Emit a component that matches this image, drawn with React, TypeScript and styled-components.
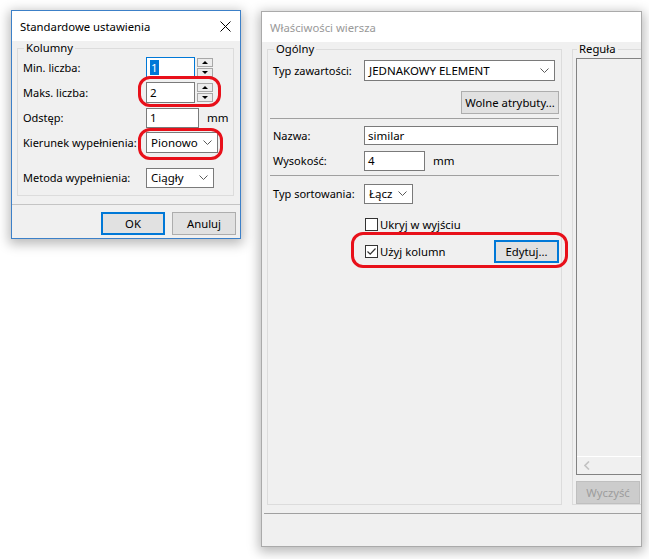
import React from "react";
import styled, { createGlobalStyle, css } from "styled-components";

const GlobalStyle = createGlobalStyle`
  html, body {
    margin: 0;
    padding: 0;
    background: #fff;
  }
  body {
    font-family: "Noto Sans", "Segoe UI", sans-serif;
    font-size: 11px;
    color: #000;
  }
`;

const Desktop = styled.div`
  position: relative;
  width: 649px;
  height: 559px;
  overflow: hidden;
  background: #fff;
`;

const Window = styled.div<{ $x: number; $y: number; $w: number; $h: number; $active?: boolean }>`
  position: absolute;
  left: ${(p) => p.$x}px;
  top: ${(p) => p.$y}px;
  width: ${(p) => p.$w}px;
  height: ${(p) => p.$h}px;
  box-sizing: border-box;
  border: 1px solid ${(p) => (p.$active ? "#3c80c8" : "#aaaaaa")};
  background: #f0f0f0;
  box-shadow: 0 3px 11px 2px rgba(0, 0, 0, 0.28);
  display: flex;
  flex-direction: column;
  overflow: hidden;
`;

const TitleBar = styled.div<{ $active?: boolean }>`
  height: 30px;
  flex: none;
  background: #fff;
  display: flex;
  align-items: center;
  padding-left: 8px;
  font-size: 11.3px;
  color: ${(p) => (p.$active ? "#000" : "#999")};
`;

const CloseIcon = styled.svg`
  margin-left: auto;
  margin-right: 9px;
`;

const DialogBody = styled.div`
  flex: 1;
  display: flex;
  flex-direction: column;
`;

const GroupArea = styled.div`
  padding: 0 6px 0 5px;
`;

const Group = styled.fieldset<{ $pl?: number; $pr?: number; $pb?: number; $w?: number }>`
  margin: 0;
  min-width: 0;
  box-sizing: border-box;
  border: 1px solid #dcdcdc;
  padding: 0 ${(p) => p.$pr ?? 2}px ${(p) => p.$pb ?? 5}px ${(p) => p.$pl ?? 5}px;
  display: flex;
  flex-direction: column;
  ${(p) => p.$w && css`width: ${p.$w}px; flex: none;`}
`;

const Legend = styled.legend`
  margin-left: 1px;
  padding: 0 2px;
  line-height: 14px;
  font-size: 11.3px;
`;

const Row = styled.div<{ $h: number; $mt?: number; $label: number }>`
  display: grid;
  grid-template-columns: ${(p) => p.$label}px auto;
  align-items: center;
  height: ${(p) => p.$h}px;
  margin-top: ${(p) => p.$mt ?? 0}px;
  font-size: 11px;
  white-space: nowrap;
`;

const Controls = styled.div<{ $end?: boolean }>`
  display: flex;
  align-items: center;
  justify-content: ${(p) => (p.$end ? "flex-end" : "flex-start")};
`;

const Field = styled.div<{ $w: number; $h: number; $focused?: boolean }>`
  box-sizing: border-box;
  width: ${(p) => p.$w}px;
  height: ${(p) => p.$h}px;
  border: 1px solid ${(p) => (p.$focused ? "#0078d7" : "#7a7a7a")};
  background: #fff;
  display: flex;
  align-items: center;
  padding-left: 3px;
  font-size: 11.5px;
`;

const Selected = styled.span`
  background: #0078d7;
  color: #fff;
  padding: 0 1px;
`;

const SpinButtons = styled.div`
  display: flex;
  flex-direction: column;
  gap: 1px;
  margin-left: 2px;
`;

const SpinButton = styled.div<{ $down?: boolean }>`
  box-sizing: border-box;
  width: 16px;
  height: 9px;
  border: 1px solid #a8a8a8;
  background: #ececec;
  display: flex;
  align-items: center;
  justify-content: center;

  &::after {
    content: "";
    border-left: 3px solid transparent;
    border-right: 3px solid transparent;
    ${(p) =>
      p.$down
        ? css`border-top: 3px solid #000;`
        : css`border-bottom: 3px solid #000;`}
  }
`;

const Combo = styled.div<{ $w: number; $h: number }>`
  box-sizing: border-box;
  width: ${(p) => p.$w}px;
  height: ${(p) => p.$h}px;
  border: 1px solid #7a7a7a;
  background: #fff;
  display: flex;
  align-items: center;
  padding: 0 5px 0 4px;
  font-size: 11.5px;
`;

const ComboText = styled.span`
  flex: 1;
`;

const Unit = styled.span`
  margin-left: 8px;
  font-size: 11.5px;
`;

const Separator = styled.div<{ $color?: string; $mt?: number; $ml?: number }>`
  height: 1px;
  flex: none;
  background: ${(p) => p.$color ?? "#a0a0a0"};
  margin-top: ${(p) => p.$mt ?? 0}px;
  margin-left: ${(p) => p.$ml ?? 0}px;
`;

const ButtonRow = styled.div`
  display: flex;
  justify-content: flex-end;
  gap: 7px;
  padding-right: 4px;
  margin-top: 7px;
`;

const Button = styled.button<{ $w: number; $default?: boolean; $off?: boolean }>`
  box-sizing: border-box;
  width: ${(p) => p.$w}px;
  height: 23px;
  padding: 0;
  font-family: inherit;
  font-size: 11.3px;
  color: #000;
  background: #e1e1e1;
  border: 1px solid #adadad;
  ${(p) => p.$default && css`border: 2px solid #0078d7;`}
  ${(p) =>
    p.$off &&
    css`
      background: #cccccc;
      border-color: #bfbfbf;
      color: #9d9d9d;
    `}
`;

const TopArea = styled.div`
  flex: 1;
  display: flex;
  gap: 10px;
  padding: 0 0 8px 5px;
  min-height: 0;
`;

const BottomArea = styled.div`
  height: 32px;
  flex: none;
`;

const CheckRow = styled.label`
  display: flex;
  align-items: center;
  gap: 2px;
  margin-left: 1px;
  font-size: 11.3px;
`;

const CheckBox = styled.span`
  box-sizing: border-box;
  width: 13px;
  height: 13px;
  border: 1px solid #333;
  background: #fff;
  display: flex;
  align-items: center;
  justify-content: center;
`;

const ListBox = styled.div`
  flex: 1;
  margin-top: 2px;
  border: 1px solid #828282;
  background: #f0f0f0;
  display: flex;
  flex-direction: column;
  justify-content: flex-end;
`;

const ScrollBar = styled.div`
  height: 17px;
  border-top: 1px solid #fff;
  display: flex;
  align-items: center;
  padding-left: 7px;
`;

const Ring = styled.div<{ $x: number; $y: number; $w: number; $h: number }>`
  position: absolute;
  left: ${(p) => p.$x}px;
  top: ${(p) => p.$y}px;
  width: ${(p) => p.$w}px;
  height: ${(p) => p.$h}px;
  box-sizing: border-box;
  border: 3px solid #e8101a;
  border-radius: 12px;
  pointer-events: none;
`;

const Chevron = () => (
  <svg width="9" height="5" viewBox="0 0 9 5">
    <path d="M0.5 0.5 L4.5 4.5 L8.5 0.5" fill="none" stroke="#5a5a5a" strokeWidth="1" />
  </svg>
);

const Select: React.FC<{ w: number; h: number; value: string }> = ({ w, h, value }) => (
  <Combo $w={w} $h={h}>
    <ComboText>{value}</ComboText>
    <Chevron />
  </Combo>
);

const Spin: React.FC<{ value: React.ReactNode; focused?: boolean }> = ({ value, focused }) => (
  <Controls>
    <Field $w={49} $h={21} $focused={focused}>
      {value}
    </Field>
    <SpinButtons>
      <SpinButton />
      <SpinButton $down />
    </SpinButtons>
  </Controls>
);

const Check: React.FC<{ checked?: boolean; label: string }> = ({ checked, label }) => (
  <CheckRow>
    <CheckBox>
      {checked && (
        <svg width="11" height="11" viewBox="0 0 11 11">
          <path d="M1.5 5.5 L4.2 8.2 L9.5 2.5" fill="none" stroke="#333" strokeWidth="1.2" />
        </svg>
      )}
    </CheckBox>
    {label}
  </CheckRow>
);

const ColumnsDialog = () => (
  <Window $x={11} $y={10} $w={230} $h={229} $active>
    <TitleBar $active>
      Standardowe ustawienia
      <CloseIcon width="11" height="11" viewBox="0 0 11 11">
        <path d="M0.5 0.5 L10.5 10.5 M10.5 0.5 L0.5 10.5" stroke="#000" strokeWidth="1" />
      </CloseIcon>
    </TitleBar>
    <DialogBody>
      <GroupArea>
        <Group $pl={5} $pr={5}>
          <Legend>Kolumny</Legend>
          <Row $h={25} $label={123}>
            Min. liczba:
            <Spin value={<Selected>1</Selected>} focused />
          </Row>
          <Row $h={25} $label={123}>
            Maks. liczba:
            <Spin value="2" />
          </Row>
          <Row $h={25} $label={123}>
            Odstęp:
            <Controls>
              <Field $w={53} $h={20}>1</Field>
              <Unit>mm</Unit>
            </Controls>
          </Row>
          <Row $h={25} $label={123}>
            Kierunek wypełnienia:
            <Select w={72} h={21} value="Pionowo" />
          </Row>
          <Row $h={25} $mt={10} $label={123}>
            Metoda wypełnienia:
            <Select w={68} h={20} value="Ciągły" />
          </Row>
        </Group>
      </GroupArea>
      <Separator $color="#c4c4c4" $mt={8} />
      <ButtonRow>
        <Button $w={64} $default>OK</Button>
        <Button $w={64}>Anuluj</Button>
      </ButtonRow>
    </DialogBody>
  </Window>
);

const RowPropertiesWindow = () => (
  <Window $x={261} $y={11} $w={381} $h={536}>
    <TitleBar>Właściwości wiersza</TitleBar>
    <DialogBody>
      <TopArea>
        <Group $w={295} $pl={5} $pr={2}>
          <Legend>Ogólny</Legend>
          <Row $h={28} $label={91}>
            Typ zawartości:
            <Select w={191} h={21} value="JEDNAKOWY ELEMENT" />
          </Row>
          <Row $h={24} $mt={6} $label={91}>
            <span />
            <Controls $end>
              <Button $w={98}>Wolne atrybuty...</Button>
            </Controls>
          </Row>
          <Separator $mt={4} $ml={-3} />
          <Row $h={20} $mt={6} $label={91}>
            Nazwa:
            <Field $w={194} $h={19}>similar</Field>
          </Row>
          <Row $h={21} $mt={5} $label={91}>
            Wysokość:
            <Controls>
              <Field $w={61} $h={20}>4</Field>
              <Unit>mm</Unit>
            </Controls>
          </Row>
          <Separator $mt={4} $ml={-3} />
          <Row $h={21} $mt={7} $label={91}>
            Typ sortowania:
            <Select w={49} h={20} value="Łącz" />
          </Row>
          <Row $h={17} $mt={12} $label={91}>
            <span />
            <Check label="Ukryj w wyjściu" />
          </Row>
          <Row $h={24} $mt={6} $label={91}>
            <span />
            <Controls>
              <Check checked label="Użyj kolumn" />
              <Button $w={65} $default style={{ marginLeft: "auto" }}>
                Edytuj...
              </Button>
            </Controls>
          </Row>
        </Group>
        <Group $w={120} $pl={3} $pr={0} $pb={0}>
          <Legend>Reguła</Legend>
          <ListBox>
            <ScrollBar>
              <svg width="6" height="9" viewBox="0 0 6 9">
                <path d="M5 0.5 L1 4.5 L5 8.5" fill="none" stroke="#c2c2c2" strokeWidth="1.6" />
              </svg>
            </ScrollBar>
          </ListBox>
          <Button $w={64} $off style={{ marginTop: 6 }}>
            Wyczyść
          </Button>
        </Group>
      </TopArea>
      <Separator $ml={2} />
      <BottomArea />
    </DialogBody>
  </Window>
);

export default function App() {
  return (
    <>
      <GlobalStyle />
      <Desktop>
        <RowPropertiesWindow />
        <ColumnsDialog />
        <Ring $x={138} $y={76} $w={83} $h={31} />
        <Ring $x={138} $y={128} $w={85} $h={32} />
        <Ring $x={351} $y={232} $w={217} $h={36} />
      </Desktop>
    </>
  );
}
